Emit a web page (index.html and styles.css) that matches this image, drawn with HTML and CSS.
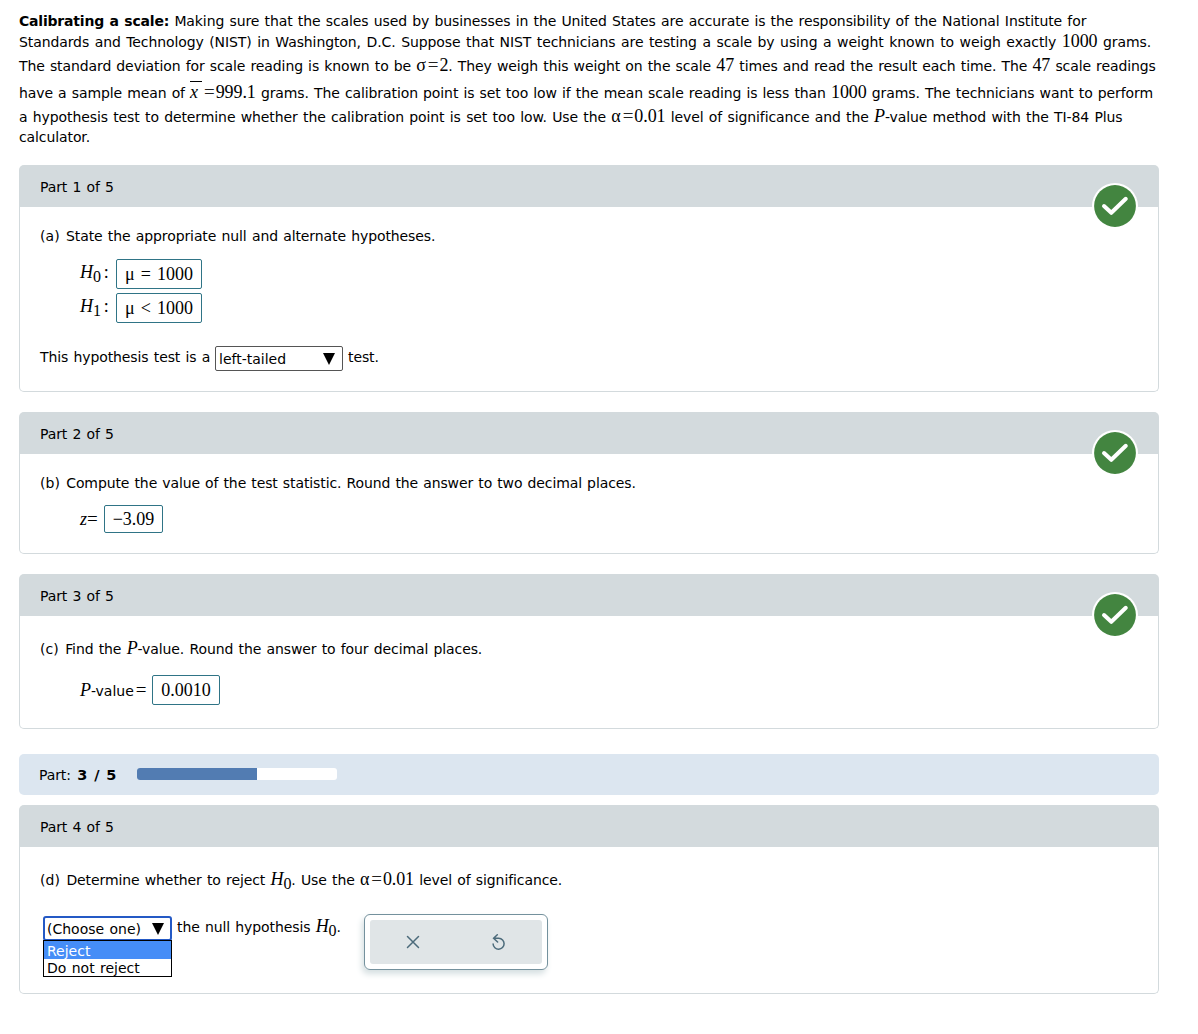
FILE: index.html
```html
<!DOCTYPE html>
<html lang="en">
<head>
  <meta charset="utf-8">
  <title>Calibrating a scale</title>
  <link rel="stylesheet" href="styles.css">
</head>
<body>
  <main class="page">
    <section class="problem">
      <div class="line"><b>Calibrating a scale:</b> Making sure that the scales used by businesses in the United States are accurate is the responsibility of the National Institute for</div>
      <div class="line line-2">Standards and Technology (NIST) in Washington, D.C. Suppose that NIST technicians are testing a scale by using a weight known to weigh exactly <span class="math">1000</span> grams.</div>
      <div class="line line-3">The standard deviation for scale reading is known to be <span class="math">σ<span class="eq">=</span>2</span>. They weigh this weight on the scale <span class="math">47</span> times and read the result each time. The <span class="math">47</span> scale readings</div>
      <div class="line line-4">have a sample mean of <span class="math"><i class="xbar">x</i><span class="eq">=</span>999.1</span> grams. The calibration point is set too low if the mean scale reading is less than <span class="math">1000</span> grams. The technicians want to perform</div>
      <div class="line line-5">a hypothesis test to determine whether the calibration point is set too low. Use the <span class="math">α<span class="eq">=</span>0.01</span> level of significance and the <i class="math">P</i>-value method with the TI-84 Plus</div>
      <div class="line">calculator.</div>
    </section>

    <section class="card">
      <header class="card-header">Part 1 of 5
        <svg class="check" viewBox="0 0 46 46"><circle cx="23" cy="23" r="23" fill="#fff"/><circle cx="23" cy="23" r="20.9" fill="#438540"/><path d="M12 23l7.3 6.8 14.5-14" fill="none" stroke="#fff" stroke-width="4" stroke-linecap="round" stroke-linejoin="round"/></svg>
      </header>
      <div class="card-body">
        <p class="question"><span class="letter">(a)</span> State the appropriate null and alternate hypotheses.</p>
        <div class="hypotheses">
          <div class="row"><span class="math label"><i>H</i><sub>0</sub><span class="colon">:</span></span><span class="answer wide">μ = 1000</span></div>
          <div class="row"><span class="math label"><i>H</i><sub>1</sub><span class="colon">:</span></span><span class="answer wide">μ &lt; 1000</span></div>
        </div>
        <div class="sentence">
          <span>This hypothesis test is a</span>
          <span class="select">left-tailed <svg class="arrow" viewBox="0 0 12 12"><path d="M0 0h12L6 12z"/></svg></span>
          <span>test.</span>
        </div>
      </div>
    </section>

    <section class="card">
      <header class="card-header">Part 2 of 5
        <svg class="check" viewBox="0 0 46 46"><circle cx="23" cy="23" r="23" fill="#fff"/><circle cx="23" cy="23" r="20.9" fill="#438540"/><path d="M12 23l7.3 6.8 14.5-14" fill="none" stroke="#fff" stroke-width="4" stroke-linecap="round" stroke-linejoin="round"/></svg>
      </header>
      <div class="card-body">
        <p class="question statistic-question"><span class="letter">(b)</span> Compute the value of the test statistic. Round the answer to two decimal places.</p>
        <div class="row statistic"><span class="math z-label"><i>z</i><span class="z-eq">=</span></span><span class="answer z-answer">−3.09</span></div>
      </div>
    </section>

    <section class="card">
      <header class="card-header">Part 3 of 5
        <svg class="check" viewBox="0 0 46 46"><circle cx="23" cy="23" r="23" fill="#fff"/><circle cx="23" cy="23" r="20.9" fill="#438540"/><path d="M12 23l7.3 6.8 14.5-14" fill="none" stroke="#fff" stroke-width="4" stroke-linecap="round" stroke-linejoin="round"/></svg>
      </header>
      <div class="card-body pvalue-body">
        <p class="question"><span class="letter">(c)</span> Find the <i class="math">P</i>-value. Round the answer to four decimal places.</p>
        <div class="row pvalue"><span class="p-label"><i class="math">P</i>-value<span class="math p-eq">=</span></span><span class="answer p-answer">0.0010</span></div>
      </div>
    </section>

    <div class="progress">
      <span class="progress-text">Part: <b>3 / 5</b></span>
      <div class="track"><div class="fill" style="width: 60%"></div></div>
    </div>

    <section class="card last">
      <header class="card-header">Part 4 of 5</header>
      <div class="card-body decision-body">
        <p class="question"><span class="letter">(d)</span> Determine whether to reject <span class="math"><i>H</i><sub>0</sub></span>. Use the <span class="math">α<span class="eq">=</span>0.01</span> level of significance.</p>
        <div class="decision">
          <div class="dropdown">
            <span class="select focused">(Choose one) <svg class="arrow" viewBox="0 0 12 12"><path d="M0 0h12L6 12z"/></svg></span>
            <ul class="options">
              <li class="active">Reject</li>
              <li>Do not reject</li>
            </ul>
          </div>
          <span class="null-text">the null hypothesis <span class="math"><i>H</i><sub>0</sub></span>.</span>
          <div class="toolbar">
            <div class="tools">
              <svg class="tool" viewBox="0 0 16 16"><path d="M2.5 2.5l11 11M13.5 2.5l-11 11"/></svg>
              <svg class="tool" viewBox="0 0 16 16"><path d="M6.3 0.8L2.6 4.2l4 3.8M3 4.2h4.8a5.5 5.5 0 1 1-5.7 5.8"/></svg>
            </div>
          </div>
        </div>
      </div>
    </section>
  </main>
</body>
</html>
```
FILE: styles.css
```css
body {
  margin: 0;
  background: #fff;
  color: #000;
  font-family: "DejaVu Sans", Verdana, sans-serif;
  font-size: 14px;
  line-height: 20px;
  letter-spacing: -0.1px;
  word-spacing: 0.9px;
}

.page {
  width: 1140px;
  padding: 11px 0 0 19px;
}

.problem {
  margin-bottom: 18px;
}

.problem b {
  letter-spacing: -0.2px;
}

/* lines with math in them are a bit taller */
.line {
  height: 20px;
  white-space: nowrap;
}

.line-2 { height: 22px; line-height: 22px; word-spacing: 1.22px; }
.line-3 { height: 26px; line-height: 26px; word-spacing: 0.8px; }
.line-4 { height: 28px; line-height: 28px; word-spacing: 0.8px; }
.line-5 { word-spacing: 0.97px; }

.math {
  font-family: "Liberation Serif", "Times New Roman", serif;
  font-size: 18px;
  line-height: 0;
  letter-spacing: -0.1px;
  word-spacing: 0;
}

.math sub {
  font-size: 16px;
  line-height: 0;
  vertical-align: -4px;
}

.eq {
  margin: 0 1px 0 2px;
  color: #222;
  font-size: 19px;
}

.xbar {
  display: inline-block;
  width: 12px;
  border-top: 1px solid #000;
  line-height: 20px;
}

.card {
  margin-bottom: 20px;
}

.card-header {
  display: flex;
  justify-content: space-between;
  height: 42px;
  padding: 0 21px;
  background: #d3dadd;
  border-radius: 5px 5px 0 0;
  line-height: 44px;
}

.check {
  width: 46px;
  height: 46px;
  margin-top: 18px;
}

.card-body {
  padding: 19px 20px 20px;
  border: 1px solid #d3dadd;
  border-top: 0;
  border-radius: 0 0 5px 5px;
}

.question {
  margin: 0;
  white-space: nowrap;
}

.letter {
  margin-right: 1px;
  letter-spacing: 0.1px;
}

.statistic-question {
  word-spacing: 0.75px;
}

.hypotheses {
  display: grid;
  gap: 4px;
  margin: 13px 0 23px;
}

.row {
  display: flex;
  align-items: center;
  padding-left: 40px;
}

.label {
  width: 36px;
  margin-top: -4px;
  line-height: 20px;
}

.colon {
  margin-left: 3px;
}

.answer {
  box-sizing: border-box;
  height: 30px;
  border: 1px solid #2f7486;
  border-radius: 2px;
  font-family: "Liberation Serif", "Times New Roman", serif;
  font-size: 18px;
  letter-spacing: 0;
  line-height: 28px;
  text-align: center;
}

.wide {
  width: 86px;
  word-spacing: 1.5px;
}

.sentence {
  display: flex;
  align-items: center;
  gap: 5px;
  height: 25px;
}

.sentence > span:not(.select) {
  margin-top: -3px;
}

.sentence > span:first-child {
  width: 170px;
  white-space: nowrap;
}

.select {
  box-sizing: border-box;
  display: flex;
  align-items: center;
  justify-content: space-between;
  width: 128px;
  height: 25px;
  padding: 0 7px 0 3px;
  border: 1px solid #555;
  border-radius: 2px;
  letter-spacing: 0;
}

.arrow {
  width: 12px;
  height: 12px;
}

.statistic {
  margin-top: 12px;
}

.z-label {
  width: 24px;
}

.z-eq {
  font-size: 19px;
}

.z-answer {
  width: 59px;
  height: 28px;
  line-height: 26px;
}

.pvalue-body {
  padding: 23px 20px;
}

.pvalue {
  margin-top: 16px;
}

.p-label {
  width: 72px;
  padding-top: 1px;
  letter-spacing: 0;
  white-space: nowrap;
}

.p-eq {
  margin-left: 2px;
  font-size: 19px;
}

.p-answer {
  width: 68px;
}

.progress {
  display: flex;
  align-items: center;
  height: 41px;
  margin: 25px 0 10px;
  padding-left: 20px;
  background: #dce6f0;
  border-radius: 5px;
}

.progress-text {
  width: 98px;
  word-spacing: 1px;
}

.progress b {
  margin-left: 1px;
  font-size: 14.5px;
  letter-spacing: 0.4px;
}

.track {
  width: 200px;
  height: 12px;
  margin-top: -2px;
  background: #fff;
  border-radius: 3px;
  overflow: hidden;
}

.fill {
  height: 12px;
  background: #527cb2;
}

.decision-body {
  padding: 23px 23px 23px 20px;
}

.decision {
  display: flex;
  align-items: flex-start;
  height: 56px;
  margin: 24px 0 0 3px;
}

.dropdown {
  position: relative;
  width: 129px;
  margin-top: 2px;
}

.focused {
  width: 129px;
  padding: 0 6px 0 2px;
  border: 2px solid #2459c5;
  border-radius: 3px;
}

/* open list under the select */
.options {
  position: absolute;
  top: 24px;
  left: 0;
  box-sizing: border-box;
  width: 129px;
  margin: 0;
  padding: 0;
  border: 1px solid #000;
  background: #fff;
  list-style: none;
  letter-spacing: 0;
}

.options li {
  height: 17.5px;
  padding-left: 3px;
  line-height: 19px;
}

.options .active {
  background: #458df7;
  color: #fff;
  line-height: 20px;
}

.null-text {
  width: 187px;
  margin: 3px 0 0 5px;
  white-space: nowrap;
}

.toolbar {
  box-sizing: border-box;
  width: 184px;
  height: 56px;
  padding: 5px;
  border: 1px solid #74919d;
  border-radius: 6px;
  box-shadow: -2px 4px 6px #d5dfe1;
}

.tools {
  display: flex;
  align-items: center;
  justify-content: space-around;
  height: 44px;
  background: #e0e5e7;
  border-radius: 3px;
}

.tool {
  width: 16px;
  height: 16px;
  fill: none;
  stroke: #4c6b7b;
  stroke-width: 1.5;
  stroke-linecap: round;
}
```
